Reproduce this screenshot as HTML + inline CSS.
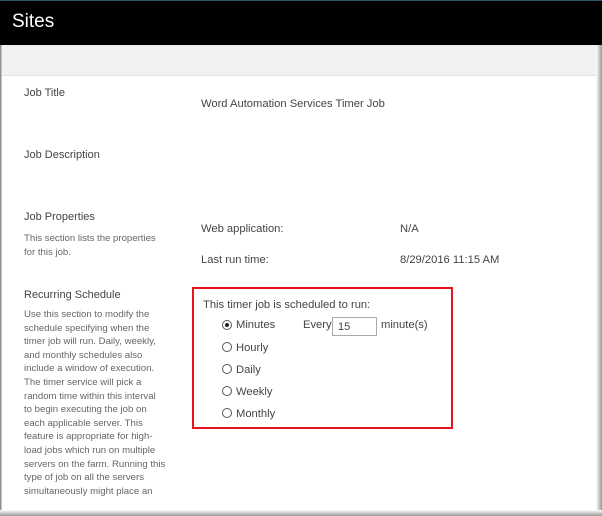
<!DOCTYPE html>
<html><head><style>
body{margin:0;width:602px;height:516px;overflow:hidden;background:#fff;font-family:"Liberation Sans",sans-serif;position:relative}
.a{position:absolute;white-space:nowrap}
.h{font-size:11px;color:#444}
.d{font-size:9.6px;color:#666;line-height:13.6px}
.v{font-size:11.2px;color:#444}
.r{width:10px;height:10px;border:1px solid #555;border-radius:50%;box-sizing:border-box;position:absolute}
</style></head><body>
<div class="a" style="left:0;top:0;width:602px;height:45px;background:#000;border-top:1px solid #2a5a6a;box-sizing:border-box"></div>
<div class="a" style="left:12px;top:11px;font-size:19px;color:#fff">Sites</div>
<div class="a" style="left:0;top:45px;width:602px;height:30px;background:#f1f1f1;border-bottom:1px solid #e4e4e4"></div>
<div class="a" style="left:0;top:45px;width:2px;height:471px;background:linear-gradient(90deg,#777,#ddd)"></div>
<div class="a" style="left:596px;top:45px;width:6px;height:471px;background:linear-gradient(90deg,#fff,#999)"></div>
<div class="a" style="left:0;top:510px;width:602px;height:6px;background:linear-gradient(180deg,#fff,#999)"></div>

<div class="a h" style="left:24px;top:87px">Job Title</div>
<div class="a v" style="left:201px;top:98px">Word Automation Services Timer Job</div>
<div class="a h" style="left:24px;top:149px">Job Description</div>
<div class="a h" style="left:24px;top:211px">Job Properties</div>
<div class="a d" style="left:24px;top:232px">This section lists the properties<br>for this job.</div>
<div class="a v" style="left:201px;top:223px">Web application:</div>
<div class="a v" style="left:400px;top:223px">N/A</div>
<div class="a v" style="left:201px;top:254px">Last run time:</div>
<div class="a v" style="left:400px;top:254px">8/29/2016 11:15 AM</div>

<div class="a h" style="left:24px;top:289px">Recurring Schedule</div>
<div class="a d" style="left:24px;top:308px">Use this section to modify the<br>schedule specifying when the<br>timer job will run. Daily, weekly,<br>and monthly schedules also<br>include a window of execution.<br>The timer service will pick a<br>random time within this interval<br>to begin executing the job on<br>each applicable server. This<br>feature is appropriate for high-<br>load jobs which run on multiple<br>servers on the farm. Running this<br>type of job on all the servers<br>simultaneously might place an</div>

<div class="a" style="left:192px;top:287px;width:261px;height:142px;border:2px solid #e8141c;box-sizing:border-box"></div>
<div class="a v" style="left:203px;top:299px">This timer job is scheduled to run:</div>
<div class="r" style="left:222px;top:320px"></div><div class="a" style="left:225px;top:323px;width:4px;height:4px;border-radius:50%;background:#222"></div>
<div class="a v" style="left:236px;top:319px">Minutes</div>
<div class="a v" style="left:303px;top:319px">Every</div>
<div class="a" style="left:332px;top:317px;width:45px;height:19px;border:1px solid #aaa;box-sizing:border-box;font-size:11px;color:#444;padding:3px 0 0 5px">15</div>
<div class="a v" style="left:381px;top:319px">minute(s)</div>
<div class="r" style="left:222px;top:342px"></div><div class="a v" style="left:236px;top:342px">Hourly</div>
<div class="r" style="left:222px;top:364px"></div><div class="a v" style="left:236px;top:364px">Daily</div>
<div class="r" style="left:222px;top:386px"></div><div class="a v" style="left:236px;top:386px">Weekly</div>
<div class="r" style="left:222px;top:408px"></div><div class="a v" style="left:236px;top:408px">Monthly</div>
</body></html>
